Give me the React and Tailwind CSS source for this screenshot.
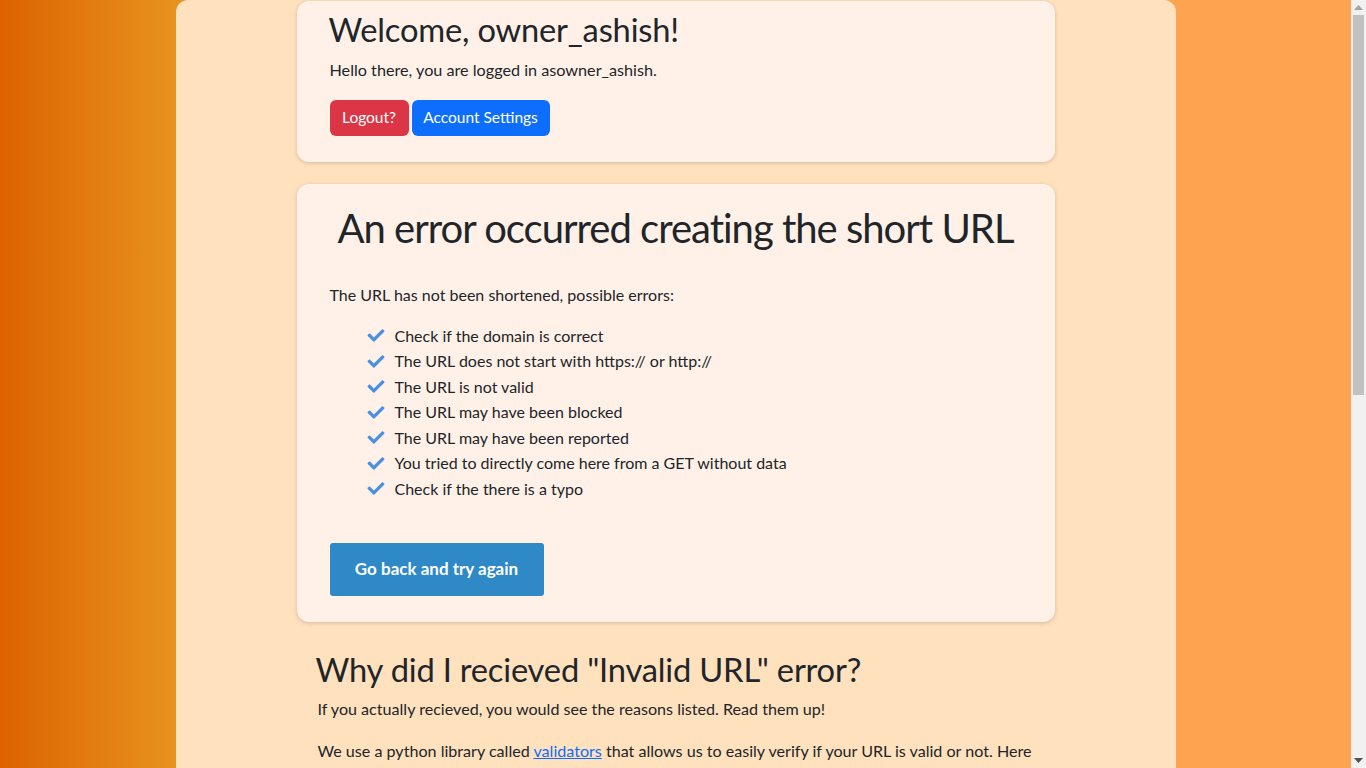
import React from "react";

function Check() {
  return (
    <svg viewBox="0 0 512 512" className="w-[20px] h-[17px] shrink-0" fill="#4a90e2">
      <path d="M173.898 439.404l-166.4-166.4c-9.997-9.997-9.997-26.206 0-36.204l36.203-36.204c9.997-9.998 26.207-9.998 36.204 0L192 312.69 432.095 72.596c9.997-9.997 26.207-9.997 36.204 0l36.203 36.204c9.997 9.997 9.997 26.206 0 36.204l-294.4 294.401c-9.998 9.997-26.207 9.997-36.204-.001z" />
    </svg>
  );
}

const reasons = [
  "Check if the domain is correct",
  "The URL does not start with https:// or http://",
  "The URL is not valid",
  "The URL may have been blocked",
  "The URL may have been reported",
  "You tried to directly come here from a GET without data",
  "Check if the there is a typo",
];

function Scrollbar() {
  return (
    <div className="w-[15px] h-screen shrink-0 bg-[#f1f1f1] flex flex-col items-center">
      <div className="h-[15px] w-full flex items-center justify-center">
        <svg width="9" height="5" viewBox="0 0 9 5"><path d="M0 5 L4.5 0 L9 5 Z" fill="#a3a3a3" /></svg>
      </div>
      <div className="w-[11px] h-[380px] bg-[#c1c1c1]" />
      <div className="flex-1" />
      <div className="h-[15px] w-full flex items-center justify-center">
        <svg width="9" height="5" viewBox="0 0 9 5"><path d="M0 0 L9 0 L4.5 5 Z" fill="#505050" /></svg>
      </div>
    </div>
  );
}

export default function App() {
  return (
    <div className="h-screen flex overflow-hidden" style={{ fontFamily: "Lato, 'Noto Sans', sans-serif" }}>
      <div className="flex-1 h-screen overflow-hidden text-[#212529] bg-[linear-gradient(90deg,#dc6300_0px,#e8921f_176px,#f9a04a_700px,#fea34f_1176px)]">
        <div className="w-[1000px] mx-auto bg-[#ffe1be] rounded-t-[12px] flex flex-col items-center pb-[60px]">
          {/* Card 1 */}
          <div className="w-[758px] mt-[1px] bg-[#fff1e8] rounded-[12px] shadow-[0_1px_4px_rgba(0,0,0,0.18)] px-[32px] pt-[7px] pb-[26px]">
            <h1 className="text-[32.7px] leading-[44px] tracking-[-0.2px]">Welcome, owner_ashish!</h1>
            <p className="text-[16.2px] leading-[26px] mt-[5px] ml-[1px]">Hello there, you are logged in asowner_ashish.</p>
            <div className="flex gap-[3px] mt-[17px] ml-[1px]">
              <button className="bg-[#dc3545] text-white text-[15.5px] h-[36px] w-[79px] rounded-[6px]">Logout?</button>
              <button className="bg-[#0d6efd] text-white text-[15.5px] h-[36px] w-[138px] rounded-[6px]">Account Settings</button>
            </div>
          </div>

          {/* Card 2 */}
          <div className="w-[758px] mt-[22px] bg-[#fff1e8] rounded-[12px] shadow-[0_1px_4px_rgba(0,0,0,0.18)] px-[33px] pt-[20px] pb-[26px]">
            <h2 className="text-[40px] leading-[48px] text-center tracking-[-1px]">An error occurred creating the short URL</h2>
            <p className="text-[16px] leading-[26px] mt-[30px]">The URL has not been shortened, possible errors:</p>
            <ul className="mt-[15px] ml-[36px] flex flex-col">
              {reasons.map((r) => (
                <li key={r} className="flex items-center gap-[9px] h-[25.5px] text-[16px]">
                  <Check />
                  <span>{r}</span>
                </li>
              ))}
            </ul>
            <button className="mt-[41px] bg-[#2e89c6] text-white font-bold text-[17px] h-[53px] w-[214px] rounded-[3px]">
              Go back and try again
            </button>
          </div>

          {/* Info section */}
          <div className="w-[758px] pl-[19px] pr-[12px] mt-[26px]">
            <h2 className="text-[32.7px] leading-[44px] tracking-[-0.2px]">Why did I recieved "Invalid URL" error?</h2>
            <p className="text-[16.1px] leading-[26px] mt-[4px] ml-[2px]">
              If you actually recieved, you would see the reasons listed. Read them up!
            </p>
            <p className="text-[16.1px] leading-[26px] mt-[16px] ml-[2px]">
              We use a python library called{" "}
              <a href="#" className="text-[#0d6efd] underline">validators</a> that allows us to easily verify if your URL is valid or not. Here
              are some of the most common reasons why a URL fails validation:
            </p>
            <ul className="list-disc ml-[40px] mt-[16px] text-[16.1px] leading-[26px]">
              <li>The URL is missing the scheme (https:// or http://)</li>
              <li>The domain name contains invalid characters</li>
              <li>The top level domain does not exist</li>
              <li>The URL contains spaces or unescaped characters</li>
              <li>The URL is an IP address in a private range</li>
            </ul>
            <h2 className="text-[32.7px] leading-[44px] mt-[32px] tracking-[-0.2px]">Why was my URL blocked?</h2>
            <p className="text-[16.1px] leading-[26px] mt-[4px] ml-[2px]">
              Some URLs are blocked by the administrators because they were found to be malicious, spam or phishing websites.
              If you believe that your URL was blocked by mistake, please contact us and we will review it as soon as possible.
            </p>
          </div>
        </div>
      </div>
      <Scrollbar />
    </div>
  );
}
